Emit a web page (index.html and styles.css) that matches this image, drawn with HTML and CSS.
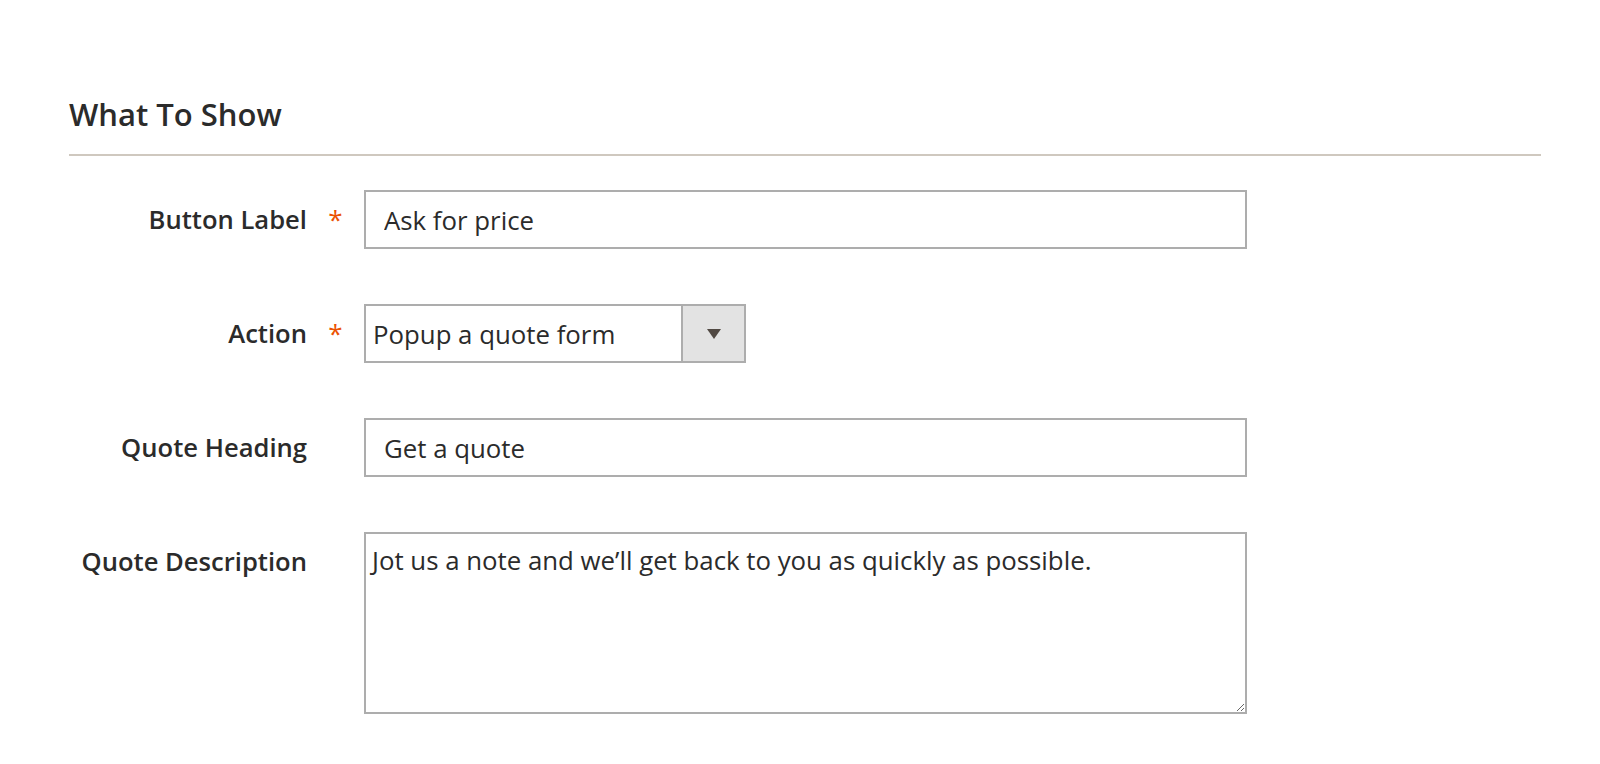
FILE: index.html
```html
<!DOCTYPE html>
<html lang="en">
<head>
<meta charset="UTF-8">
<title>What To Show</title>
<link rel="stylesheet" href="styles.css">
</head>
<body>

<div class="section">
  <h2 class="section-title">What To Show</h2>

  <div class="field">
    <label class="field-label" for="buttonLabel">Button Label</label>
    <span class="required">*</span>
    <input id="buttonLabel" class="text-input" value="Ask for price">
  </div>

  <div class="field">
    <label class="field-label" for="action">Action</label>
    <span class="required">*</span>
    <div class="select-wrap">
      <select id="action" class="select-input">
        <option>Popup a quote form</option>
        <option>Redirect to contact page</option>
      </select>
      <span class="select-btn"><span class="arrow"></span></span>
    </div>
  </div>

  <div class="field">
    <label class="field-label" for="quoteHeading">Quote Heading</label>
    <span class="required"></span>
    <input id="quoteHeading" class="text-input" value="Get a quote">
  </div>

  <div class="field">
    <label class="field-label" for="quoteDesc">Quote Description</label>
    <span class="required"></span>
    <textarea id="quoteDesc" class="text-area">Jot us a note and we’ll get back to you as quickly as possible.</textarea>
  </div>
</div>

</body>
</html>
```

FILE: styles.css
```css
body {
    margin: 0;
    background: #fff;
    font-family: "Open Sans", "Liberation Sans", sans-serif;
    color: #2b2b2b;
}

.section {
    padding: 94px 59px 40px 69px;
}

.section-title {
    margin: 0;
    font-size: 31px;
    font-weight: 600;
    line-height: 40px;
    padding-bottom: 20px;
    border-bottom: 2px solid #cfc8bf;
}

.field {
    display: grid;
    grid-template-columns: 238px 57px 883px;
    align-items: start;
    margin-top: 55px;
}
.section-title + .field { margin-top: 34px; }

.field-label {
    text-align: right;
    font-size: 25.6px;
    font-weight: 600;
    line-height: 59px;
}

.required {
    color: #eb5202;
    font-size: 26px;
    line-height: 59px;
    text-align: center;
}

.text-input, .text-area, .select-input {
    font-family: "Open Sans", "Liberation Sans", sans-serif;
    font-size: 25.8px;
    color: #2b2b2b;
    outline: none;
}

.text-input {
    box-sizing: border-box;
    width: 883px;
    height: 59px;
    border: 2px solid #adadad;
    padding: 0 18px;
}

.select-wrap {
    display: flex;
    box-sizing: border-box;
    width: 382px;
    height: 59px;
    border: 2px solid #adadad;
}
.select-input {
    flex: 1;
    border: none;
    padding: 0 7px;
    background: #fff;
    appearance: none;
    -webkit-appearance: none;
}
.select-btn {
    width: 61px;
    background: #e3e3e3;
    border-left: 2px solid #adadad;
    display: flex;
    align-items: center;
    justify-content: center;
}
.arrow {
    width: 0;
    height: 0;
    border-left: 7px solid transparent;
    border-right: 7px solid transparent;
    border-top: 10px solid #514943;
}

.text-area {
    box-sizing: border-box;
    width: 883px;
    height: 182px;
    border: 2px solid #adadad;
    padding: 8px 6px;
    line-height: 36px;
    resize: vertical;
}
```
